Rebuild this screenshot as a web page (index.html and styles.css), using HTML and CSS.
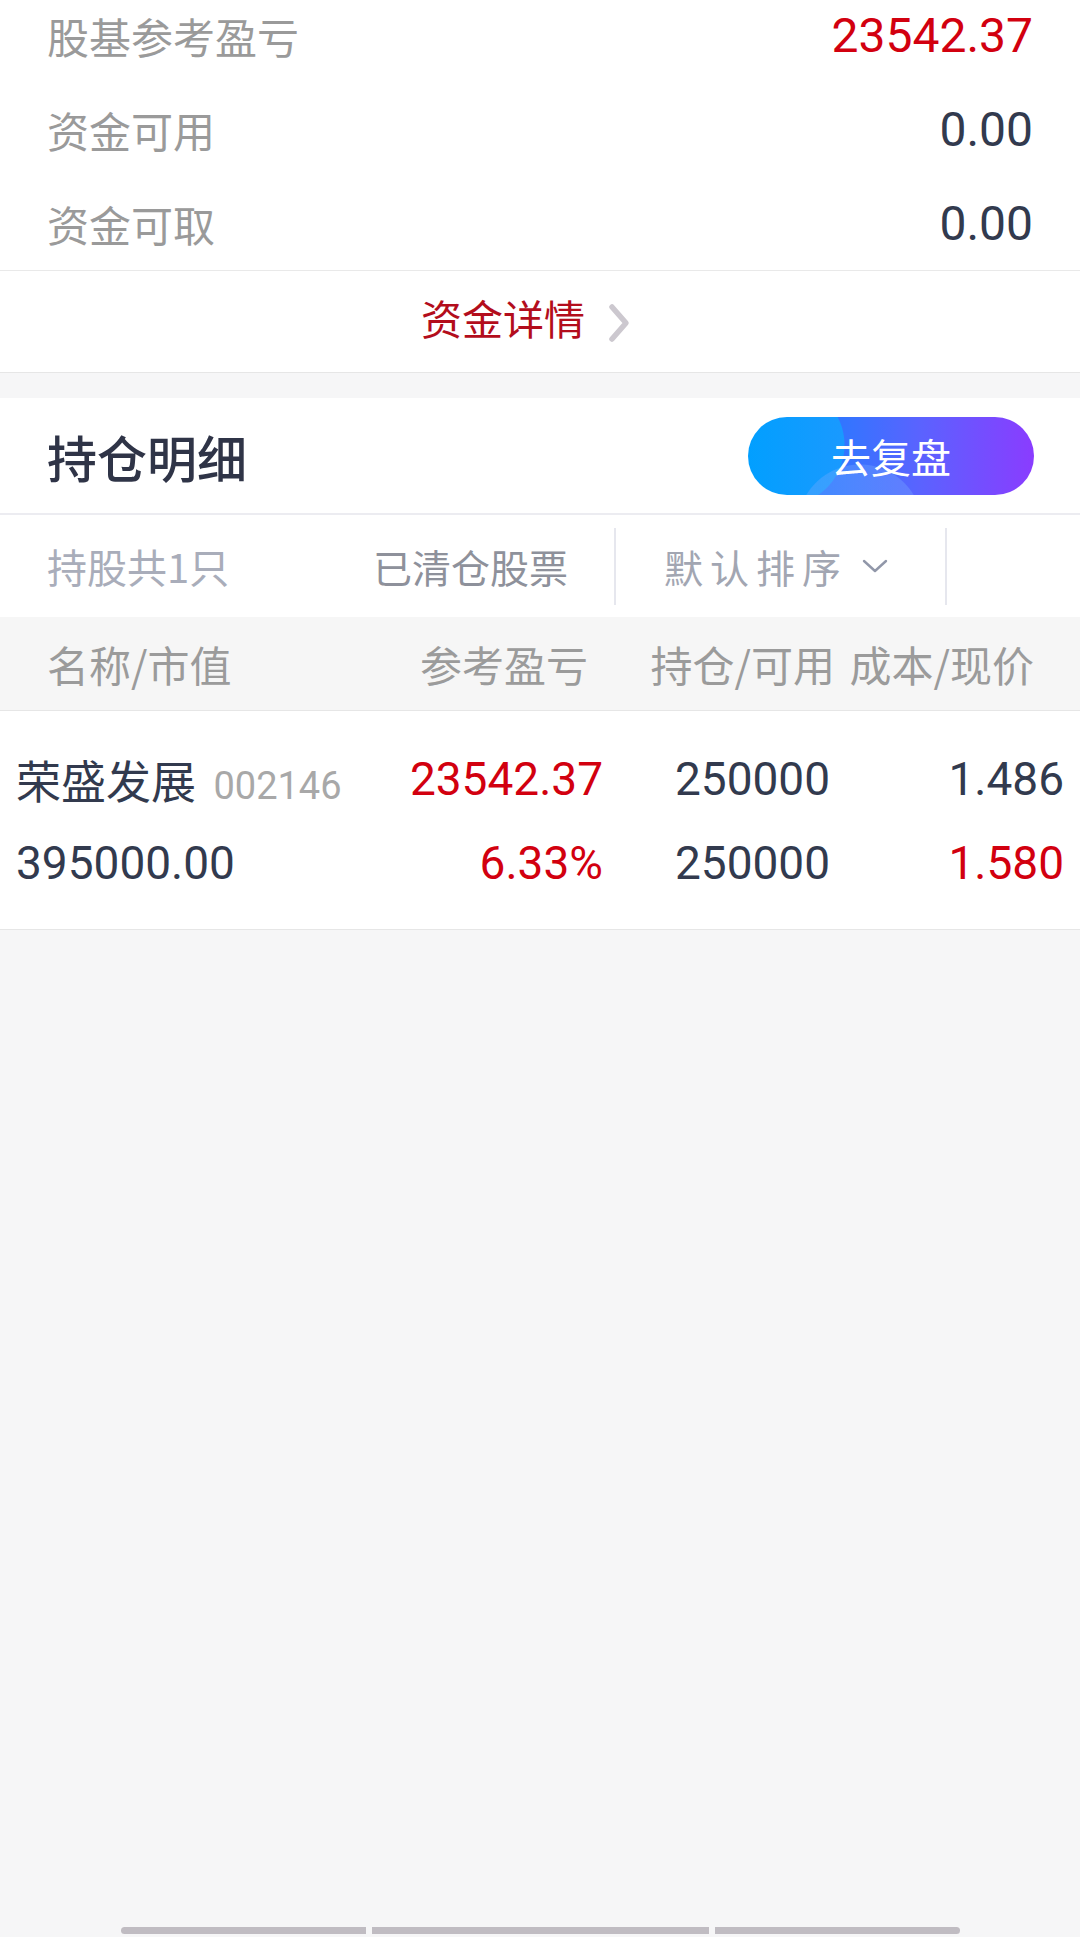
FILE: index.html
```html
<!DOCTYPE html>
<html lang="zh-CN">
<head>
  <meta charset="UTF-8">
  <meta name="viewport" content="width=device-width, initial-scale=1.0">
  <title>持仓</title>
  <link rel="stylesheet" href="styles.css">
</head>
<body>
  <div class="page">

    <div class="summary">
      <div class="sum-row">
        <span class="sum-label">股基参考盈亏</span>
        <span class="sum-value red">23542.37</span>
      </div>
      <div class="sum-row">
        <span class="sum-label">资金可用</span>
        <span class="sum-value">0.00</span>
      </div>
      <div class="sum-row">
        <span class="sum-label">资金可取</span>
        <span class="sum-value">0.00</span>
      </div>
    </div>

    <a class="detail-link" href="#">
      <span>资金详情</span>
      <svg class="detail-arrow" width="26" height="42" viewBox="0 0 26 42">
        <polyline points="5,5 19,21 5,37" fill="none" stroke="#ccc8cf" stroke-width="5.5" stroke-linecap="round" stroke-linejoin="round"/>
      </svg>
    </a>

    <div class="holdings">
      <div class="hold-head">
        <h2 class="hold-title">持仓明细</h2>
        <button class="replay-btn" type="button">去复盘</button>
      </div>

      <div class="filter-bar">
        <span class="f-count">持股共1只</span>
        <span class="f-cleared">已清仓股票</span>
        <span class="f-sort">
          默认排序
          <svg class="sort-arrow" width="26" height="14" viewBox="0 0 26 14">
            <polyline points="2,2 13,12 24,2" fill="none" stroke="#9197a9" stroke-width="2.4" stroke-linecap="round" stroke-linejoin="round"/>
          </svg>
        </span>
      </div>

      <div class="table-head">
        <span>名称/市值</span>
        <span class="th-right">参考盈亏</span>
        <span class="th-right">持仓/可用</span>
        <span class="th-right">成本/现价</span>
      </div>

      <div class="stock-row">
        <div class="cell">
          <span class="stock-name">荣盛发展</span>
          <span class="stock-code">002146</span>
        </div>
        <div class="cell right num red">23542.37</div>
        <div class="cell center num">250000</div>
        <div class="cell right num">1.486</div>

        <div class="cell num">395000.00</div>
        <div class="cell right num red">6.33%</div>
        <div class="cell center num">250000</div>
        <div class="cell right num red">1.580</div>
      </div>
    </div>

    <div class="filler"></div>

    <div class="nav-bar">
      <span class="nav-seg first"></span>
      <span class="nav-seg mid"></span>
      <span class="nav-seg last"></span>
    </div>
  </div>
</body>
</html>
```

FILE: styles.css
```css
body {
  margin: 0;
  padding: 0;
  background: #f6f6f7;
  font-family: Roboto, "Noto Sans CJK SC", sans-serif;
  color: #323a4e;
}

.page {
  min-height: 1937px;
  display: flex;
  flex-direction: column;
  overflow: hidden;
}

.red {
  color: #d2000f;
}

/* summary block */
.summary {
  background: #fff;
  margin-top: -12px;
  padding: 0 47px;
  border-bottom: 1px solid #e9e9e9;
}
.sum-row {
  height: 94px;
  display: flex;
  align-items: center;
  justify-content: space-between;
}
.sum-label {
  font-family: "Noto Sans CJK SC", sans-serif;
  font-size: 42px;
  color: #9a9a9a;
}
.sum-value {
  font-size: 48px;
}

.detail-link {
  display: flex;
  align-items: center;
  justify-content: center;
  height: 91px;
  padding: 0 26px 10px 0;
  background: #fff;
  border-bottom: 1px solid #e6e6e6;
  text-decoration: none;
  font-family: "Noto Sans CJK SC", sans-serif;
  font-size: 41px;
  color: #b30d1c;
}
.detail-arrow {
  margin-left: 22px;
  margin-top: 12px;
}

/* holdings */
.holdings {
  margin-top: 25px;
  background: #fff;
}
.hold-head {
  height: 115px;
  padding: 0 46px 0 47px;
  display: flex;
  align-items: center;
  justify-content: space-between;
  border-bottom: 2px solid #ececf1;
}
.hold-title {
  margin: 0;
  font-family: "Noto Sans CJK SC", sans-serif;
  font-size: 50px;
  font-weight: 500;
  color: #2f3447;
}
.replay-btn {
  width: 286px;
  height: 78px;
  border: none;
  border-radius: 39px;
  font-family: "Noto Sans CJK SC", sans-serif;
  font-size: 40px;
  color: #fff;
  background:
    radial-gradient(circle at 112px 110px, rgba(120, 170, 255, 0.35) 0 62px, transparent 63px),
    radial-gradient(circle at 36px 28px, rgba(0, 190, 255, 0.5) 0 60px, transparent 61px),
    linear-gradient(90deg, #0380ff 0%, #3574ff 35%, #5a63ff 60%, #8a3cff 100%);
}

.filter-bar {
  height: 102px;
  display: flex;
  align-items: center;
  padding-left: 47px;
  font-family: "Noto Sans CJK SC", sans-serif;
  font-size: 39px;
}
.f-count {
  width: 326px;
  font-size: 40px;
  color: #a9adba;
}
.f-cleared {
  width: 241px;
  color: #8e919b;
}
.f-sort {
  width: 281px;
  height: 77px;
  padding-left: 48px;
  border-left: 2px solid #e6e7ee;
  border-right: 2px solid #e6e7ee;
  display: flex;
  align-items: center;
  letter-spacing: 7px;
  color: #a2a6b2;
}
.sort-arrow {
  margin-left: 14px;
}

.table-head {
  height: 93px;
  background: #f6f6f6;
  border-bottom: 1px solid #e6e6e6;
  padding: 0 46px 0 47px;
  display: grid;
  grid-template-columns: 300px 241px 247px 1fr;
  align-items: center;
  font-family: "Noto Sans CJK SC", sans-serif;
  font-size: 42px;
  color: #9b9b9b;
}
.th-right {
  text-align: right;
}

.stock-row {
  padding: 26px 16px 24px 16px;
  display: grid;
  grid-template-columns: 310px 277px 299px 1fr;
  grid-auto-rows: 84px;
  align-items: center;
  border-bottom: 1px solid #e6e6e6;
}
.cell {
  font-size: 46px;
  white-space: nowrap;
}
.cell.right {
  text-align: right;
}
.cell.center {
  text-align: center;
}
.stock-name {
  font-family: "Noto Sans CJK SC", sans-serif;
  font-size: 45px;
  color: #323a4e;
}
.stock-code {
  font-size: 38px;
  color: #a8a8a8;
  margin-left: 6px;
}

.filler {
  flex: 1;
}

.nav-bar {
  display: flex;
  justify-content: center;
  gap: 6px;
  padding-bottom: 3px;
}
.nav-seg {
  height: 7px;
  background: #c0bcc2;
}
.nav-seg.first {
  width: 245px;
  border-radius: 4px 0 0 4px;
}
.nav-seg.mid {
  width: 337px;
}
.nav-seg.last {
  width: 245px;
  border-radius: 0 4px 4px 0;
}
```
